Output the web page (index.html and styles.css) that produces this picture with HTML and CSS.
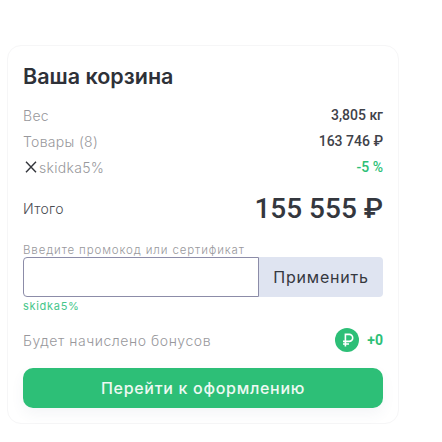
FILE: index.html
```html
<!DOCTYPE html>
<html lang="ru">
<head>
<meta charset="utf-8">
<title>Ваша корзина</title>
<link rel="stylesheet" href="styles.css">
</head>
<body>
<section class="card">
  <h2 class="title">Ваша корзина</h2>
  <div class="row"><span class="label">Вес</span><span class="value">3,805 кг</span></div>
  <div class="row"><span class="label">Товары (8)</span><span class="value">163 746 ₽</span></div>
  <div class="row">
    <span class="label promo">
      <svg class="cross" viewBox="0 0 12 12"><path d="M1 .8 11 11.2M11 .8 1 11.2"/></svg>skidka5%
    </span>
    <span class="value green">-5 %</span>
  </div>
  <div class="total"><span class="total-label">Итого</span><span class="total-value">155 555 ₽</span></div>
  <div class="hint">Введите промокод или сертификат</div>
  <div class="promo-form">
    <input class="promo-input" type="text" aria-label="Промокод">
    <button class="apply" type="button">Применить</button>
  </div>
  <div class="applied">skidka5%</div>
  <div class="bonus">
    <span class="label bonus-label">Будет начислено бонусов</span>
    <span class="bonus-value">
      <svg class="coin" viewBox="0 0 24 24"><circle cx="12" cy="12" r="12"/><path d="M10.4 18.6V6.4h3.8a3.5 3.5 0 0 1 0 7H8M8 16h6"/></svg>
      <span class="plus">+0</span>
    </span>
  </div>
  <button class="checkout" type="button">Перейти к оформлению</button>
</section>
</body>
</html>
```
FILE: styles.css
```css
html, body { margin: 0; background: #fff; }
body { padding: 45px 43px 18px 7px; font-family: "Inter", "Liberation Sans", sans-serif; }
.card {
  box-sizing: border-box;
  width: 392px;
  height: 379px;
  padding: 18px 15px 0;
  border: 1px solid #f6f6f7;
  border-radius: 14px;
  background: #fff;
}
.title { margin: 0 0 14px; font-size: 21.5px; line-height: 24px; font-weight: 600; color: #2e3138; }
.row { display: flex; justify-content: space-between; align-items: center; height: 26px; }
.label { font-size: 14px; font-weight: 300; letter-spacing: .3px; color: #98989c; }
.bonus-label { letter-spacing: .55px; }
.value { font-family: Roboto, sans-serif; font-size: 14px; font-weight: 500; color: #3f4249; }
.green { color: #2dbf77; }
.promo { display: flex; align-items: center; gap: 2px; }
.cross { width: 12px; height: 12px; margin-left: 2px; fill: none; stroke: #33353b; stroke-width: 1.4; }
.total { display: flex; justify-content: space-between; align-items: center; height: 36px; margin-top: 10px; }
.total-label { font-size: 14px; font-weight: 300; letter-spacing: .3px; color: #4a4c52; }
.total-value { font-family: Roboto, sans-serif; font-size: 28px; font-weight: 500; color: #34373e; }
.hint { margin-top: 17px; height: 14px; font-size: 11.5px; font-weight: 300; line-height: 14px; color: #98989c; letter-spacing: .87px; }
.promo-form { display: flex; height: 40px; }
.promo-input {
  box-sizing: border-box; width: 236px; height: 40px; margin: 0; padding: 0 8px;
  border: 1px solid #8c8ca8; border-radius: 4px 0 0 4px; background: #fff; outline: none;
}
.apply {
  flex: 1; border: 0; border-radius: 0 4px 4px 0; background: #dfe4f1;
  font: 400 16px "Inter", sans-serif; color: #35383f; letter-spacing: .8px; padding: 0;
}
.applied { margin-top: 2px; height: 14px; font-size: 11px; line-height: 14px; color: #45c68a; letter-spacing: .7px; }
.bonus { display: flex; justify-content: space-between; align-items: center; height: 24px; margin-top: 15px; }
.bonus-value { display: flex; align-items: center; gap: 8px; }
.coin { width: 24px; height: 24px; }
.coin circle { fill: #2dbf77; }
.coin path { fill: none; stroke: #fff; stroke-width: 1.6; }
.plus { font-family: Roboto, sans-serif; font-size: 14px; font-weight: 700; color: #2dbf77; }
.checkout {
  display: block; width: 100%; height: 40px; margin-top: 16px; padding: 0; border: 0; border-radius: 10px;
  background: #2dbf77; color: #eef9f3; font: 500 16px "Inter", sans-serif; letter-spacing: .7px;
  box-shadow: 0 6px 14px rgba(60, 80, 120, .06);
}
```
